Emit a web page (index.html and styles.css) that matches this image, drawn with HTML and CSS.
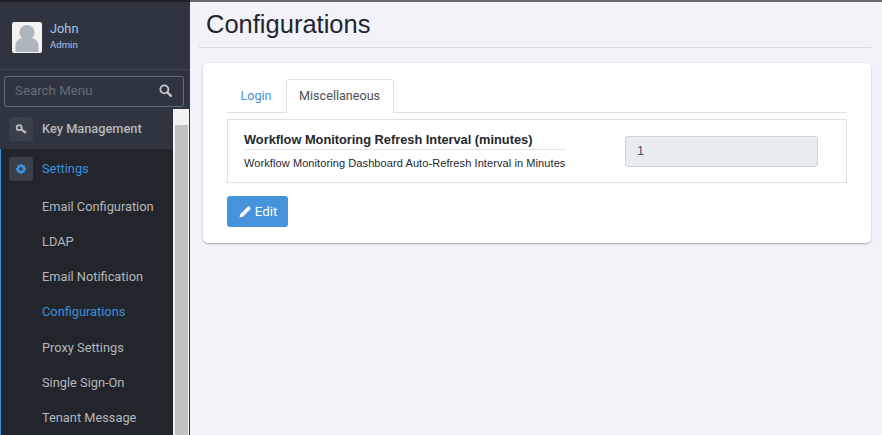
FILE: index.html
```html
<!DOCTYPE html>
<html lang="en">
<head>
<meta charset="utf-8">
<title>Configurations</title>
<link rel="stylesheet" href="styles.css">
</head>
<body>
<div class="app">
  <aside class="sidebar">
    <div class="profile">
      <svg class="avatar" viewBox="0 0 30 31" aria-hidden="true">
        <rect width="30" height="31" rx="2" fill="#f3f3f3"/>
        <circle cx="15" cy="10.5" r="7.6" fill="#adb5bd"/>
        <path d="M3.5 30v-6.5c0-4.6 3.4-7.3 7-7.300 1.500.9 7.500.9 9 0 3.600 0 7 2.700 7 7.300V30z" fill="#adb5bd"/>
      </svg>
      <div class="profile-text">
        <div class="profile-name">John</div>
        <div class="profile-role">Admin</div>
      </div>
    </div>
    <div class="search">
      <span class="search-text">Search Menu</span>
      <svg class="search-icon" viewBox="0 0 14 14" aria-hidden="true">
        <circle cx="5.800" cy="5.800" r="4.300" fill="none" stroke="#c3c8ce" stroke-width="2"/>
        <path d="M9 9l3.800 3.800" stroke="#c3c8ce" stroke-width="2.400" stroke-linecap="round"/>
      </svg>
    </div>
    <div class="nav-wrap">
      <nav class="nav">
        <div class="nav-row">
          <span class="nav-icon">
            <svg viewBox="0 0 14 14" width="13" height="13" aria-hidden="true">
              <circle cx="4.500" cy="5" r="2.700" fill="none" stroke="#b9bdc3" stroke-width="2"/>
              <path d="M6.500 6.500l5.500 4M9 8.300l-.8 1.300M11 9.800l-.9 1.300" stroke="#b9bdc3" stroke-width="2" fill="none"/>
            </svg>
          </span>
          <span class="nav-label">Key Management</span>
        </div>
        <div class="nav-section">
          <div class="nav-row nav-row-active">
            <span class="nav-icon">
              <svg viewBox="0 0 14 14" width="10" height="10" aria-hidden="true">
                <circle cx="7" cy="7" r="4.300" fill="none" stroke="#3d8fdc" stroke-width="3.600"/>
                <path d="M7 0v14M0 7h14M2.200 2.200l9.600 9.600M11.800 2.200l-9.600 9.600" stroke="#3d8fdc" stroke-width="2.800" fill="none" stroke-dasharray="3 8 3"/>
              </svg>
            </span>
            <span class="nav-label">Settings</span>
          </div>
          <a class="sub-item">Email Configuration</a>
          <a class="sub-item">LDAP</a>
          <a class="sub-item">Email Notification</a>
          <a class="sub-item sub-item-active">Configurations</a>
          <a class="sub-item">Proxy Settings</a>
          <a class="sub-item">Single Sign-On</a>
          <a class="sub-item">Tenant Message</a>
        </div>
      </nav>
      <div class="scrollbar"><div class="scroll-thumb"></div></div>
    </div>
  </aside>
  <main class="main">
    <h1 class="page-title">Configurations</h1>
    <section class="card">
      <div class="tabs">
        <a class="tab">Login</a>
        <a class="tab tab-active">Miscellaneous</a>
      </div>
      <div class="setting">
        <div class="setting-info">
          <div class="setting-title">Workflow Monitoring Refresh Interval (minutes)</div>
          <div class="setting-desc">Workflow Monitoring Dashboard Auto-Refresh Interval in Minutes</div>
        </div>
        <div class="setting-value">1</div>
      </div>
      <button class="btn" type="button">
        <svg viewBox="0 0 12 12" width="12" height="12" aria-hidden="true">
          <path d="M0.500 11.500l.7-3.300L8 1.400l2.600 2.600-6.800 6.800zM8.800.7c.5-.5 1-.5 1.400-.1l1.200 1.200c.4.400.4.900-.1 1.400l-.7.700L8 1.400z" fill="#fff"/>
        </svg>
        Edit
      </button>
    </section>
  </main>
</div>
</body>
</html>
```
FILE: styles.css
```css
* { box-sizing: border-box; }
html, body { margin: 0; height: 100%; }
body {
  background: #f1f3f8;
  font-family: "Liberation Sans", Arial, sans-serif;
  overflow: hidden;
}
.app {
  display: flex;
  height: 435px;
}
.sidebar {
  width: 190px;
  flex: none;
  background: #2f3540;
  border-top: 2px solid #1c1f24;
  display: flex;
  flex-direction: column;
  overflow: hidden;
  font-family: Roboto, "Liberation Sans", sans-serif;
}
.profile {
  height: 68px;
  flex: none;
  padding: 20px 12px 0;
  display: flex;
  gap: 8px;
  border-bottom: 1px solid #414752;
}
.avatar { width: 30px; height: 31px; flex: none; }
.profile-text { color: #a9c4ea; margin-top: -1px; }
.profile-name { font-size: 12.800px; line-height: 15px; }
.profile-role { font-size: 9.600px; line-height: 12px; margin-top: 3px; }
.search {
  margin: 6px 6px 0 4px;
  height: 31px;
  flex: none;
  border: 1px solid #656b75;
  border-radius: 3px;
  padding: 0 11px 2px 10px;
  display: flex;
  align-items: center;
  justify-content: space-between;
}
.search-text { color: #676d76; font-size: 13.300px; }
.search-icon { width: 13px; height: 13px; }
.nav-wrap {
  margin-top: 2px;
  flex: 1;
  display: flex;
  min-height: 0;
}
.nav { width: 173px; flex: none; }
.nav-row {
  height: 40px;
  display: flex;
  align-items: center;
  padding-left: 9px;
  gap: 9px;
  font-size: 12.800px;
  font-weight: 500;
  color: #b4b7bb;
}
.nav-label { padding-bottom: 2px; }
.nav-icon {
  width: 24px;
  height: 24px;
  flex: none;
  background: #3a404a;
  border-radius: 3px;
  display: flex;
  align-items: center;
  justify-content: center;
}
.nav-section {
  background: #22262c;
  border-left: 1px solid #3d8fdc;
  height: 300px;
}
.nav-row-active { color: #3d8fdc; font-weight: 400; padding-left: 8px; }
.sub-item {
  display: flex;
  align-items: center;
  height: 35.200px;
  padding: 0 0 0.500px 41px;
  font-size: 12.800px;
  color: #b4b7bb;
}
.sub-item-active { color: #3d8fdc; }
.scrollbar {
  width: 16px;
  background: #f1f1f1;
  padding: 16px 1px 0 2px;
}
.scroll-thumb { height: 100%; background: #c1c1c1; }
.main {
  flex: 1;
  min-width: 0;
  padding: 0 11px 0 8px;
  border-top: 2px solid #6a6c70;
}
.page-title {
  margin: 0;
  height: 46px;
  padding: 8px 0 0 7px;
  font-size: 25.500px;
  line-height: 29px;
  font-weight: 400;
  color: #1f2630;
  border-bottom: 1px solid #d9dbe0;
  border-left: 1px solid #eceef3;
}
.card {
  margin: 15px 0 0 5px;
  height: 180px;
  background: #fff;
  border-radius: 5px;
  box-shadow: 0 1px 2px rgba(0,0,0,.3);
  padding: 16px 24px;
}
.tabs {
  display: flex;
  height: 34px;
  border-bottom: 1px solid #dee2e6;
}
.tab {
  height: 34px;
  padding: 0 13px 2px 12.500px;
  display: flex;
  align-items: center;
  font-size: 12.600px;
  font-family: Roboto, "Liberation Sans", sans-serif;
  color: #4a90d9;
  border: 1px solid transparent;
  border-radius: 3px 3px 0 0;
}
.tab-active {
  color: #495057;
  background: #fff;
  border-color: #dee2e6 #dee2e6 #fff;
}
.setting {
  margin-top: 6px;
  height: 64px;
  border: 1px solid #dee2e6;
  padding: 11px 0 0 16px;
  display: flex;
}
.setting-info { width: 322px; flex: none; }
.setting-title {
  font-size: 12.800px;
  font-weight: 700;
  line-height: 17px;
  color: #23272e;
  padding-bottom: 1px;
  border-bottom: 1px solid #e3e5e8;
}
.setting-desc {
  font-size: 11px;
  line-height: 14px;
  color: #23272e;
  margin-top: 6px;
  letter-spacing: 0.090px;
  white-space: nowrap;
}
.setting-value {
  margin: 5px 0 0 59px;
  width: 193px;
  height: 31px;
  background: #e9ecef;
  border: 1px solid #ced4da;
  border-radius: 3px;
  font-size: 12.800px;
  line-height: 28px;
  padding-left: 11px;
  color: #495070;
}
.btn {
  margin-top: 13px;
  width: 61px;
  height: 31px;
  border: 0;
  border-radius: 3px;
  background: #4593da;
  color: #fff;
  font-family: Roboto, "Liberation Sans", sans-serif;
  font-size: 13.300px;
  display: flex;
  align-items: center;
  justify-content: center;
  gap: 4px;
  padding: 0 0 0 1px;
}
```
